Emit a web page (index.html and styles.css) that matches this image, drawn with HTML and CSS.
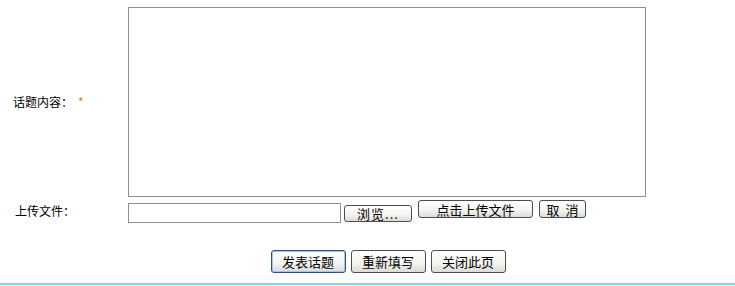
FILE: index.html
```html
<!DOCTYPE html>
<html lang="zh-CN">
<head>
    <meta charset="UTF-8">
    <title>发表话题</title>
    <link rel="stylesheet" href="styles.css">
</head>
<body>
    <form class="topic-form">
        <div class="form-row row-content">
            <label class="form-label">话题内容：<span class="required">*</span></label>
            <textarea class="topic-text"></textarea>
        </div>
        <div class="form-row row-upload">
            <label class="form-label label-upload">上传文件：</label>
            <div class="upload-field">
                <input type="text" class="file-path">
                <button type="button" class="btn btn-browse">浏览...</button>
                <button type="button" class="btn btn-upload">点击上传文件</button>
                <button type="button" class="btn btn-cancel">取&nbsp;&nbsp;消</button>
            </div>
        </div>
        <div class="form-actions">
            <button type="submit" class="btn btn-action btn-default">发表话题</button>
            <button type="reset" class="btn btn-action">重新填写</button>
            <button type="button" class="btn btn-action">关闭此页</button>
        </div>
    </form>
    <div class="page-line"></div>
</body>
</html>
```

FILE: styles.css
```css
body {
    margin: 0;
    background: #fff;
    font-family: "Noto Sans CJK SC", "DejaVu Sans", sans-serif;
    font-size: 12px;
    color: #000;
}
.topic-form {
    height: 283px;
    display: flex;
    flex-direction: column;
}
.form-row {
    display: grid;
    grid-template-columns: 128px 1fr;
    align-items: center;
}
.row-content {
    padding-top: 7px;
}
.form-label {
    padding-left: 13px;
    line-height: 14px;
}
.label-upload {
    padding-left: 15px;
}
.required {
    color: #e0802a;
    margin-left: 5px;
}
.topic-text {
    box-sizing: border-box;
    width: 518px;
    height: 190px;
    margin: 0;
    border: 1px solid #8e9196;
    background: #fff;
    resize: none;
    display: block;
}
.row-upload {
    margin-top: 2px;
    height: 24px;
}
.upload-field {
    display: flex;
    align-items: flex-start;
    height: 24px;
}
.file-path {
    box-sizing: border-box;
    width: 213px;
    height: 20px;
    margin: 4px 0 0;
    border: 1px solid #8e9196;
    background: #fff;
    padding: 0;
}
.btn {
    box-sizing: border-box;
    font-family: "Noto Sans CJK SC", "DejaVu Sans", sans-serif;
    color: #000;
    border: 1px solid #4a4d52;
    border-radius: 3px;
    background: linear-gradient(#ffffff, #f3f3ef 60%, #dcdcd6);
    padding: 0;
    line-height: 1;
    cursor: pointer;
}
.btn-browse {
    width: 68px;
    height: 17px;
    margin: 6px 0 0 3px;
    font-size: 13px;
    letter-spacing: 1px;
}
.btn-upload {
    width: 115px;
    height: 18px;
    margin: 1px 0 0 6px;
    font-size: 13px;
}
.btn-cancel {
    width: 47px;
    height: 18px;
    margin: 1px 0 0 6px;
    font-size: 13px;
}
.form-actions {
    display: flex;
    justify-content: center;
    gap: 5px;
    padding-left: 41px;
    margin-top: 27px;
}
.btn-action {
    width: 75px;
    height: 23px;
    font-size: 13px;
}
.btn-default {
    border-color: #2e4f8c;
    box-shadow: inset 0 0 0 1px #a9c2e8;
}
.page-line {
    height: 2px;
    background: #86d0e6;
}
```
